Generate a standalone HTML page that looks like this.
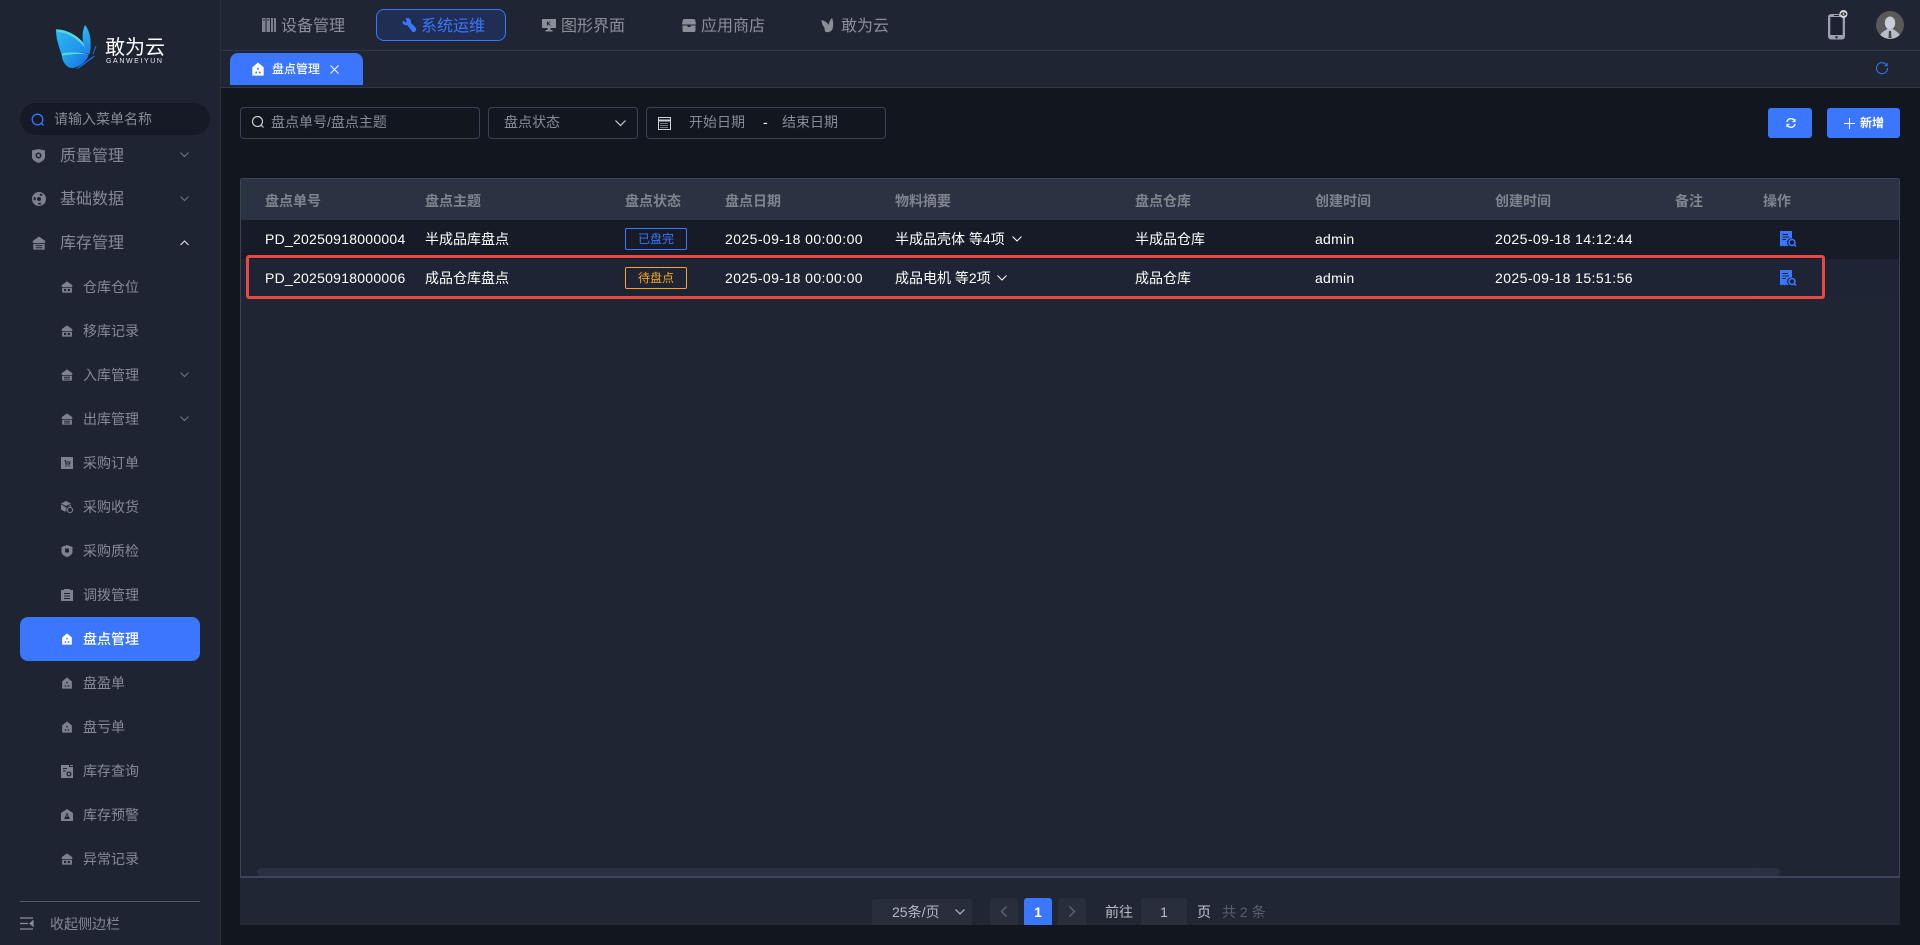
<!DOCTYPE html>
<html lang="zh-CN"><head><meta charset="utf-8"><title>盘点管理</title>
<style>
*{box-sizing:border-box;margin:0;padding:0}
html,body{width:1920px;height:945px;overflow:hidden;background:#12161f}
body{position:relative;font-family:"Liberation Sans","Noto Sans CJK SC",sans-serif;font-size:14px;color:#fff}
.a{position:absolute}
.t{position:absolute;line-height:20px;white-space:nowrap}
svg{position:absolute;display:block;overflow:visible}
.m{color:#868a95;font-size:14px}
.m1{color:#868a95;font-size:16px}
.n{color:#8b8f99;font-size:16px}
.h{color:#7f848e;font-size:14px;font-weight:700;top:191px}
.r1{top:229px}.r2{top:268px}
.lat{letter-spacing:.25px}
.dt{letter-spacing:.42px}
.ph{color:#868b96;font-size:14px}
.box{position:absolute;border:1px solid #38435a;border-radius:4px}
.ic{fill:#7e828e}
.pg{position:absolute;background:#292e3d;border-radius:3px}
</style></head><body>
<svg width="0" height="0" style="position:absolute"><defs>
<linearGradient id="w1" gradientUnits="userSpaceOnUse" x1="80" y1="60" x2="175" y2="135"><stop offset="0" stop-color="#2ab8ee"/><stop offset="1" stop-color="#1e86ee"/></linearGradient>
<linearGradient id="w2" gradientUnits="userSpaceOnUse" x1="100" y1="135" x2="165" y2="175"><stop offset="0" stop-color="#22a8ea"/><stop offset="1" stop-color="#1a6ee8"/></linearGradient>
<linearGradient id="w3" gradientUnits="userSpaceOnUse" x1="165" y1="45" x2="180" y2="135"><stop offset="0" stop-color="#2bbcec"/><stop offset="1" stop-color="#1e80ec"/></linearGradient>
<symbol id="house" viewBox="0 0 16 16"><path fill-rule="evenodd" d="M8 .5 14.500 6V15.500H1.500V6ZM7 6.500H9V8.500H7ZM5 11H7V13H5ZM9 11H11V13H9Z"/></symbol>
<symbol id="ware" viewBox="0 0 16 16"><path fill-rule="evenodd" d="M8 .5 15 5.500V8H1V5.500ZM1.500 9H14.500V15.500H1.500ZM4 10.500V13.500H7V10.500ZM9 10.500V13.500H12V10.500Z"/></symbol>
<symbol id="inout" viewBox="0 0 16 16"><path fill-rule="evenodd" d="M8 .5 15 5.500V8H1V5.500ZM1.500 9H14.500V15.500H1.500ZM4 10.400V11.600H12V10.400ZM4 12.800V14H12V12.800Z"/></symbol>
</defs></svg>

<!-- sidebar -->
<div class="a" style="left:0;top:0;width:221px;height:945px;background:#1f2433;border-right:1px solid #2b3040"></div>
<!-- logo -->
<svg style="left:30px;top:10px" width="160" height="80" viewBox="0 0 480 240">
<path d="M78 58C115 58 165 85 176 132 150 124 115 126 95 134 85 105 78 85 78 58Z" fill="url(#w1)"/>
<path d="M78 58C115 58 165 85 176 130 150 88 115 68 84 66 81 64 79 61 78 58Z" fill="#52d8d6"/>
<path d="M95 131C120 124 155 126 176 134 172 152 152 170 130 174 110 176 95 155 95 131Z" fill="url(#w2)"/>
<path d="M95 131C120 124 155 126 176 134 150 130 120 132 96 137Z" fill="#52d8d6"/>
<path d="M165 45C153 70 155 110 178 134 184 115 186 70 165 45Z" fill="url(#w3)"/>
<path d="M138 177 192 137 194 140 146 175Z" fill="#1a78e8"/><path d="M189 132 198 108" stroke="#1a78e8" stroke-width="3" fill="none"/>
</svg>
<div class="t" style="left:105px;top:37px;font-size:20px;line-height:22px;color:#fff">敢为云</div>
<div class="t" style="left:106px;top:57px;font-size:7px;line-height:9px;letter-spacing:1.6px;color:#e8eaf0">GANWEIYUN</div>

<div class="a" style="left:20px;top:103px;width:190px;height:32px;border-radius:16px;background:#161a27"></div>
<svg style="left:31px;top:113px" width="14" height="14" viewBox="0 0 14 14" fill="none" stroke="#3276ff" stroke-width="1.300"><circle cx="6.500" cy="6.500" r="5.300"/><path d="M10.500 10.500 12.500 12.500"/></svg>
<div class="t m" style="left:54px;top:109px">请输入菜单名称</div>

<svg class="ic" style="left:32px;top:149px" width="13" height="14" viewBox="0 0 13 14"><path fill-rule="evenodd" d="M0 1.500 6.500 0 13 1.500V8C13 11 9 13 6.500 14 4 13 0 11 0 8ZM6.500 3.500A3 3 0 1 0 6.500 9.500 3 3 0 1 0 6.500 3.500ZM6.500 5A1.500 1.500 0 1 1 6.500 8 1.500 1.500 0 1 1 6.500 5Z"/></svg>
<div class="t m1" style="left:60px;top:147px">质量管理</div>
<svg style="left:180px;top:152px" width="9" height="6" fill="none" stroke="#70758a"><path d="M.5 .5 4.500 4.500 8.500 .5"/></svg>

<svg class="ic" style="left:32px;top:192px" width="14" height="14" viewBox="0 0 14 14"><path fill-rule="evenodd" d="M7 0A7 7 0 1 0 7 14 7 7 0 1 0 7 0ZM7 5A2 2 0 1 1 7 9 2 2 0 1 1 7 5ZM2 4.500 4 6 3.500 8.500 1.500 8ZM8 1.500 11 2.500 9.500 4 7.500 3.500ZM6 11 8.500 10.500 9.500 12.500 6.500 12.800Z"/></svg>
<div class="t m1" style="left:60px;top:190px">基础数据</div>
<svg style="left:180px;top:196px" width="9" height="6" fill="none" stroke="#70758a"><path d="M.5 .5 4.500 4.500 8.500 .5"/></svg>

<svg class="ic" style="left:32px;top:236px" width="14" height="14"><use href="#inout"/></svg>
<div class="t m1" style="left:60px;top:234px">库存管理</div>
<svg style="left:180px;top:240px" width="9" height="6" fill="none" stroke="#e8eaf0"><path d="M.5 5 4.500 1 8.500 5"/></svg>

<svg class="ic" style="left:61px;top:281px" width="12" height="12"><use href="#ware"/></svg>
<div class="t m" style="left:83px;top:277px">仓库仓位</div>
<svg class="ic" style="left:61px;top:325px" width="12" height="12"><use href="#ware"/></svg>
<div class="t m" style="left:83px;top:321px">移库记录</div>
<svg class="ic" style="left:61px;top:369px" width="12" height="12"><use href="#inout"/></svg>
<div class="t m" style="left:83px;top:365px">入库管理</div>
<svg style="left:180px;top:372px" width="9" height="6" fill="none" stroke="#70758a"><path d="M.5 .5 4.500 4.500 8.500 .5"/></svg>
<svg class="ic" style="left:61px;top:413px" width="12" height="12"><use href="#inout"/></svg>
<div class="t m" style="left:83px;top:409px">出库管理</div>
<svg style="left:180px;top:416px" width="9" height="6" fill="none" stroke="#70758a"><path d="M.5 .5 4.500 4.500 8.500 .5"/></svg>
<svg class="ic" style="left:61px;top:457px" width="12" height="12" viewBox="0 0 12 12"><path fill-rule="evenodd" d="M0 0H12V12H0ZM3 3.500 4 3.500 4.500 7.500H9L9.500 4.500H5V5.500H8.300L8.100 6.500H5.400L5 3 3 3ZM5 8.300A.7 .7 0 1 0 5 9.700 .7 .7 0 1 0 5 8.300ZM8 8.300A.7 .7 0 1 0 8 9.700 .7 .7 0 1 0 8 8.300Z"/></svg>
<div class="t m" style="left:83px;top:453px">采购订单</div>
<svg class="ic" style="left:61px;top:501px" width="12" height="12" viewBox="0 0 12 12"><path d="M5 0 10 2.500 5 5 0 2.500ZM0 3.500 4.500 6V11L0 8.500ZM5.500 6 10 3.500V6A3 3 0 0 0 5.500 10.500Z"/><circle cx="9" cy="9" r="2.600" fill="none" stroke="#7e828e" stroke-width="1"/></svg>
<div class="t m" style="left:83px;top:497px">采购收货</div>
<svg class="ic" style="left:61px;top:545px" width="12" height="12" viewBox="0 0 12 12"><path fill-rule="evenodd" d="M6 0 11.500 2V7C11.500 9.500 8 11.500 6 12 4 11.500 .5 9.500 .5 7V2ZM4 3.500V7.500H8V3.500Z"/></svg>
<div class="t m" style="left:83px;top:541px">采购质检</div>
<svg class="ic" style="left:61px;top:589px" width="12" height="12" viewBox="0 0 12 12"><path fill-rule="evenodd" d="M0 1H3V0H9V1H12V12H0ZM3 4V5H9V4ZM3 6.500V7.500H9V6.500ZM3 9V10H9V9Z"/></svg>
<div class="t m" style="left:83px;top:585px">调拨管理</div>

<div class="a" style="left:20px;top:617px;width:180px;height:44px;border-radius:8px;background:#3a76fe"></div>
<svg style="left:61px;top:633px;fill:#fff" width="12" height="12"><use href="#house"/></svg>
<div class="t" style="left:83px;top:629px;font-size:14px;color:#fff;font-weight:500">盘点管理</div>

<svg class="ic" style="left:61px;top:677px" width="12" height="12"><use href="#house"/></svg>
<div class="t m" style="left:83px;top:673px">盘盈单</div>
<svg class="ic" style="left:61px;top:721px" width="12" height="12"><use href="#house"/></svg>
<div class="t m" style="left:83px;top:717px">盘亏单</div>
<svg class="ic" style="left:61px;top:765px" width="12" height="13" viewBox="0 0 12 13"><path fill-rule="evenodd" d="M0 0H8L8 2H12V13H0ZM9 0H12V1H9ZM2 3V4H6V3ZM2 5.500V6.500H5V5.500ZM8 6.500A2.500 2.500 0 1 0 8 11.500 2.500 2.500 0 1 0 8 6.500ZM8 7.800A1.200 1.200 0 1 1 8 10.200 1.200 1.200 0 1 1 8 7.800Z"/></svg>
<div class="t m" style="left:83px;top:761px">库存查询</div>
<svg class="ic" style="left:61px;top:809px" width="12" height="12" viewBox="0 0 12 12"><path fill-rule="evenodd" d="M6 0 12 4V12H0V4ZM6 3.500 3 10H9ZM5.500 6H6.500V8H5.500Z"/></svg>
<div class="t m" style="left:83px;top:805px">库存预警</div>
<svg class="ic" style="left:61px;top:853px" width="12" height="12"><use href="#ware"/></svg>
<div class="t m" style="left:83px;top:849px">异常记录</div>

<div class="a" style="left:20px;top:901px;width:180px;height:1px;background:#555a68"></div>
<svg style="left:20px;top:917px" width="14" height="13" fill="none" stroke="#8a8e99" stroke-width="1.200"><path d="M0 1H13M0 6.500H8M0 12H13"/><path d="M13 4 10 6.500 13 9Z" fill="#8a8e99"/></svg>
<div class="t m" style="left:50px;top:914px">收起侧边栏</div>

<!-- top nav -->
<div class="a" style="left:221px;top:0;width:1699px;height:88px;background:#1f2533"></div>
<div class="a" style="left:221px;top:50px;width:1699px;height:1px;background:#30374a"></div>
<div class="a" style="left:221px;top:87px;width:1699px;height:1px;background:#30374a"></div>

<svg style="left:262px;top:18px" width="14" height="14" viewBox="0 0 14 14" fill="#7e828e"><rect width="3.500" height="14"/><rect x="4.500" width="3.500" height="14"/><rect x="9" width="2" height="14"/><rect x="12" width="2" height="14"/><path d="M.8 2H2.700M5.300 2H7.200" stroke="#1f2533"/></svg>
<div class="t n" style="left:281px;top:17px">设备管理</div>
<div class="a" style="left:376px;top:9px;width:130px;height:32px;border:1px solid #3a76fe;border-radius:8px;background:#212e53"></div>
<svg style="left:402px;top:18px" width="14" height="14" viewBox="0 0 14 14" fill="#3a76fe"><path d="M5.500 0C7.500 0 9 1.500 9 3.500 9 4 8.900 4.400 8.800 4.800L14 10V12.500L12.500 14H10.500L5.200 7A3.500 3.500 0 0 1 .5 3.500L1 2.500 3.500 4.500 5 3.500 3.500 .5C4 .2 4.800 0 5.500 0Z"/></svg>
<div class="t" style="left:421px;top:17px;font-size:16px;color:#3a76fe">系统运维</div>
<svg style="left:542px;top:19px" width="14" height="13" viewBox="0 0 14 13" fill="#8a8e99"><path fill-rule="evenodd" d="M0 0H14V9H8.500V11H10.500V12.500H3.500V11H5.500V9H0ZM5 2.500V6.500H6V5L7.800 6.500H9L6.800 4.500 8.800 2.500H7.600L6 4V2.500Z"/></svg>
<div class="t n" style="left:561px;top:17px">图形界面</div>
<svg style="left:682px;top:19px" width="14" height="13" viewBox="0 0 14 13" fill="#8a8e99"><path fill-rule="evenodd" d="M2.500 0H11.500C12.500 0 13 .5 13.300 1.500L14 5.500H0L.7 1.500C1 .5 1.500 0 2.500 0ZM.5 6.500H5.500V8H8.500V6.500H13.500V11.500C13.500 12.400 13 13 12 13H2C1 13 .5 12.400 .5 11.500Z"/></svg>
<div class="t n" style="left:701px;top:17px">应用商店</div>
<svg style="left:821px;top:18px" width="15" height="15" viewBox="0 0 15 15" fill="#8a8e99"><path d="M.5 2C3 2.500 6 4 7.500 7 8 4 9.500 1.500 11 0 12.500 3 12.500 8 11.500 11 10.500 13.500 8 14.500 5 14 3.500 13.500 3.500 11 3.500 9.500 1.500 8 .5 4.500 .5 2Z"/></svg>
<div class="t n" style="left:841px;top:17px">敢为云</div>

<!-- phone -->
<svg style="left:1828px;top:10px" width="20" height="30" viewBox="0 0 20 30">
<rect x="0" y="4" width="17" height="25.500" rx="3" fill="#9aa0b2"/><rect x="2.300" y="7" width="12.400" height="18" fill="#1c2030"/><circle cx="8.500" cy="27.300" r="1.200" fill="#1c2030"/><rect x="6" y="5" width="5" height="1" fill="#1c2030"/>
<circle cx="15.500" cy="4" r="4" fill="#d5d7de"/><ellipse cx="15.500" cy="4" rx="2.800" ry="1.800" fill="#333"/><circle cx="15.500" cy="4" r=".9" fill="#ddd"/>
</svg>
<!-- avatar -->
<svg style="left:1876px;top:11px" width="28" height="28" viewBox="0 0 28 28">
<defs><clipPath id="cav"><circle cx="14" cy="14" r="14"/></clipPath></defs>
<circle cx="14" cy="14" r="14" fill="#595959"/><g clip-path="url(#cav)"><ellipse cx="14" cy="12" rx="5.200" ry="6.500" fill="#c8cdd8"/><path d="M3 28C4 21 9 20 11 18H17C19 20 24 21 25 28Z" fill="#b8bdca"/><path d="M13 20H15L15.500 27H12.500Z" fill="#444"/></g></svg>

<!-- tab -->
<div class="a" style="left:230px;top:53px;width:133px;height:32px;background:#3a76fe;border-radius:8px 8px 0 0"></div>
<svg style="left:251px;top:62px;fill:#fff" width="14" height="14"><use href="#house"/></svg>
<div class="t" style="left:272px;top:59px;font-size:12px;color:#fff;font-weight:500">盘点管理</div>
<svg style="left:330px;top:65px" width="9" height="9" stroke="#fff" stroke-width="1"><path d="M.5 .5 8.500 8.500M8.500 .5 .5 8.500"/></svg>
<svg style="left:1876px;top:62px" width="12" height="12" viewBox="0 0 12 12" fill="none" stroke="#3a76fe" stroke-width="1"><path d="M10.800 3.500A5.500 5.500 0 1 0 11.500 6"/><path d="M11.300 .8V3.800H8.300" stroke-width=".8"/></svg>

<!-- toolbar -->
<div class="box" style="left:240px;top:107px;width:240px;height:32px"></div>
<svg style="left:251px;top:115px" width="14" height="14" viewBox="0 0 14 14" fill="none" stroke="#c8ccd4" stroke-width="1.200"><circle cx="6.500" cy="6.500" r="5"/><path d="M10.200 10.200 12.500 12.500"/></svg>
<div class="t ph" style="left:271px;top:112px">盘点单号/盘点主题</div>
<div class="box" style="left:488px;top:107px;width:150px;height:32px"></div>
<div class="t ph" style="left:504px;top:112px">盘点状态</div>
<svg style="left:615px;top:120px" width="11" height="7" fill="none" stroke="#c8ccd4" stroke-width="1.200"><path d="M.5 .5 5.500 5.500 10.500 .5"/></svg>
<div class="box" style="left:646px;top:107px;width:240px;height:32px"></div>
<svg style="left:658px;top:116px" width="13" height="14" viewBox="0 0 13 14" fill="none" stroke="#d0d4dc"><rect x=".5" y="1.500" width="12" height="12"/><path d="M.5 4.500H12.500" stroke-width="2"/><path d="M2.500 7.500H10.500M2.500 9.500H10.500M2.500 11.500H10.500" stroke-dasharray="1 1"/></svg>
<div class="t ph" style="left:689px;top:112px">开始日期</div>
<div class="t" style="left:763px;top:112px;font-size:14px;color:#fff">-</div>
<div class="t ph" style="left:782px;top:112px">结束日期</div>

<div class="a" style="left:1768px;top:108px;width:44px;height:30px;background:#3a76fe;border-radius:3px"></div>
<svg style="left:1786px;top:118px" width="10" height="10" viewBox="0 0 11 11" fill="none" stroke="#fff" stroke-width="1.400"><path d="M1 4.500A4.500 4.500 0 0 1 9 2.500L10 3.500M10 6.500A4.500 4.500 0 0 1 2 8.500L1 7.500"/><path d="M10 1V4H7M1 10V7H4" stroke-width="1"/></svg>
<div class="a" style="left:1827px;top:108px;width:73px;height:30px;background:#3a76fe;border-radius:3px"></div>
<svg style="left:1844px;top:118px" width="11" height="11" stroke="#fff" stroke-width="1"><path d="M5.500 0V11M0 5.500H11"/></svg>
<div class="t" style="left:1860px;top:113px;font-size:12px;color:#fff;font-weight:700">新增</div>

<!-- table -->
<div class="a" style="left:240px;top:178px;width:1660px;height:747px;background:#202634"></div>
<div class="a" style="left:240px;top:178px;width:1660px;height:699px;background:#1f2533;border:1px solid #38435a;border-bottom:0;border-radius:3px 3px 0 0"></div>
<div class="a" style="left:241px;top:179px;width:1658px;height:41px;background:#2b3242"></div>
<div class="a" style="left:241px;top:220px;width:1658px;height:39px;background:#161b27"></div>
<div class="a" style="left:241px;top:259px;width:1658px;height:39px;background:#1e2433"></div>
<div class="a" style="left:1757px;top:298px;width:1px;height:570px;background:#222837"></div>

<div class="t h" style="left:265px">盘点单号</div>
<div class="t h" style="left:425px">盘点主题</div>
<div class="t h" style="left:625px">盘点状态</div>
<div class="t h" style="left:725px">盘点日期</div>
<div class="t h" style="left:895px">物料摘要</div>
<div class="t h" style="left:1135px">盘点仓库</div>
<div class="t h" style="left:1315px">创建时间</div>
<div class="t h" style="left:1495px">创建时间</div>
<div class="t h" style="left:1675px">备注</div>
<div class="t h" style="left:1763px">操作</div>

<div class="t r1 lat" style="left:265px">PD_20250918000004</div>
<div class="t r1" style="left:425px">半成品库盘点</div>
<div class="a" style="left:625px;top:228px;width:62px;height:22px;border:1px solid #3a76fe;border-radius:2px;color:#3a76fe;font-size:12px;line-height:20px;text-align:center">已盘完</div>
<div class="t r1 dt" style="left:725px">2025-09-18 00:00:00</div>
<div class="t r1" style="left:895px">半成品壳体 等4项</div>
<svg style="left:1012px;top:236px" width="10" height="6" fill="none" stroke="#fff"><path d="M.5 .5 5 5 9.500 .5"/></svg>
<div class="t r1" style="left:1135px">半成品仓库</div>
<div class="t r1 lat" style="left:1315px">admin</div>
<div class="t r1 dt" style="left:1495px">2025-09-18 14:12:44</div>

<div class="t r2 lat" style="left:265px">PD_20250918000006</div>
<div class="t r2" style="left:425px">成品仓库盘点</div>
<div class="a" style="left:625px;top:267px;width:62px;height:22px;border:1px solid #f5a623;border-radius:2px;color:#f5a623;font-size:12px;line-height:20px;text-align:center">待盘点</div>
<div class="t r2 dt" style="left:725px">2025-09-18 00:00:00</div>
<div class="t r2" style="left:895px">成品电机 等2项</div>
<svg style="left:997px;top:275px" width="10" height="6" fill="none" stroke="#fff"><path d="M.5 .5 5 5 9.500 .5"/></svg>
<div class="t r2" style="left:1135px">成品仓库</div>
<div class="t r2 lat" style="left:1315px">admin</div>
<div class="t r2 dt" style="left:1495px">2025-09-18 15:51:56</div>

<svg style="left:1780px;top:231px" width="17" height="16" viewBox="0 0 17 16"><path fill="#3a76fe" fill-rule="evenodd" d="M0 0H12V7.500A4 4 0 0 0 8.500 14.500L7.500 15.500 6 14.500 4.500 15.500 3 14.500 1.500 15.500 0 14.500ZM2.500 3V4H8V3ZM2.500 5.500V6.500H9V5.500ZM2.500 8V9H6V8Z"/><circle cx="12" cy="11.500" r="3" fill="none" stroke="#3a76fe" stroke-width="1.600"/><path d="M14 13.500 16 15.500" stroke="#3a76fe" stroke-width="1.500"/></svg>
<svg style="left:1780px;top:270px" width="17" height="16" viewBox="0 0 17 16"><path fill="#3a76fe" fill-rule="evenodd" d="M0 0H12V7.500A4 4 0 0 0 8.500 14.500L7.500 15.500 6 14.500 4.500 15.500 3 14.500 1.500 15.500 0 14.500ZM2.500 3V4H8V3ZM2.500 5.500V6.500H9V5.500ZM2.500 8V9H6V8Z"/><circle cx="12" cy="11.500" r="3" fill="none" stroke="#3a76fe" stroke-width="1.600"/><path d="M14 13.500 16 15.500" stroke="#3a76fe" stroke-width="1.500"/></svg>

<div class="a" style="left:246px;top:255px;width:1579px;height:44px;border:3px solid #e8483f;border-radius:3px"></div>

<!-- scrollbar + footer -->
<div class="a" style="left:257px;top:868px;width:1523px;height:8px;background:#2b3141;border-radius:4px"></div>
<div class="a" style="left:240px;top:876px;width:1660px;height:2px;background:#3b465c"></div>

<!-- pagination clipped at 925 -->
<div class="a" style="left:241px;top:878px;width:1658px;height:47px;overflow:hidden;background:#202634">
 <div class="pg" style="left:631px;top:21px;width:100px;height:32px"></div>
 <div class="t" style="left:651px;top:24px;color:#b4b8c0;font-size:14px">25条/页</div>
 <svg style="left:714px;top:31px" width="10" height="6" fill="none" stroke="#a8acb4" stroke-width="1.300"><path d="M.5 .5 5 5 9.500 .5"/></svg>
 <div class="pg" style="left:749px;top:20px;width:28px;height:32px"></div>
 <svg style="left:760px;top:28px" width="6" height="11" fill="none" stroke="#5c6170" stroke-width="1.500"><path d="M5.500 .5 .5 5.500 5.500 10.500"/></svg>
 <div class="pg" style="left:783px;top:20px;width:28px;height:32px;background:#3a76fe;color:#fff;text-align:center;font-weight:700;font-size:14px;line-height:29px">1</div>
 <div class="pg" style="left:817px;top:20px;width:28px;height:32px"></div>
 <svg style="left:828px;top:28px" width="6" height="11" fill="none" stroke="#5c6170" stroke-width="1.500"><path d="M.5 .5 5.500 5.500 .5 10.500"/></svg>
 <div class="t" style="left:864px;top:24px;color:#b8bcc4;font-size:14px">前往</div>
 <div class="pg" style="left:900px;top:20px;width:46px;height:32px;color:#b8bcc4;text-align:center;line-height:29px;font-size:14px">1</div>
 <div class="t" style="left:956px;top:24px;color:#c4c8d0;font-size:14px">页</div>
 <div class="t" style="left:981px;top:24px;color:#5a5f6c;font-size:14px">共 2 条</div>
</div>
</body></html>
